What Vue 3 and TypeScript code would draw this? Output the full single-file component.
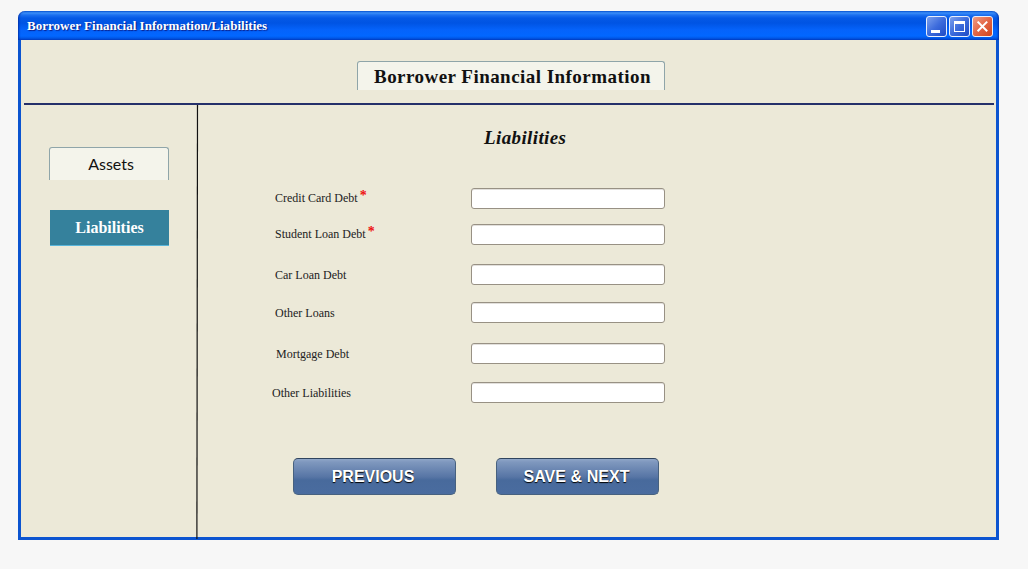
<script setup lang="ts">
import { ref } from 'vue'

interface Field {
  key: string
  label: string
  required: boolean
}

const fields: Field[] = [
  { key: 'credit', label: 'Credit Card Debt', required: true },
  { key: 'student', label: 'Student Loan Debt', required: true },
  { key: 'car', label: 'Car Loan Debt', required: false },
  { key: 'loans', label: 'Other Loans', required: false },
  { key: 'mortgage', label: 'Mortgage Debt', required: false },
  { key: 'liabilities', label: 'Other Liabilities', required: false },
]

const values = ref<Record<string, string>>({})
</script>

<template>
  <div class="page">
    <section class="window">
      <header class="titlebar">
        <span class="caption">Borrower Financial Information/Liabilities</span>
        <div class="controls">
          <svg v-for="kind in ['min', 'max', 'close']" :key="kind" class="control" width="21" height="21" viewBox="0 0 21 21">
            <defs>
              <linearGradient :id="'g-' + kind" x1="0" y1="0" x2="1" y2="1">
                <stop offset="0" :stop-color="kind === 'close' ? '#f0a088' : '#7fa3ee'" />
                <stop offset="0.5" :stop-color="kind === 'close' ? '#e36545' : '#3c6bdc'" />
                <stop offset="1" :stop-color="kind === 'close' ? '#d1441c' : '#1c48c4'" />
              </linearGradient>
            </defs>
            <rect x="0.5" y="0.5" width="20" height="20" rx="2.5" :fill="`url(#g-${kind})`" stroke="#e8effc" />
            <rect v-if="kind === 'min'" x="5" y="14" width="9" height="3" fill="#fff" />
            <path v-else-if="kind === 'max'" fill="#fff" fill-rule="evenodd" d="M5 5H16V16H5ZM6 8V15H15V8Z" />
            <path v-else fill="none" stroke="#fff" stroke-width="2" d="M5.6 5.6L15.2 15.2M15.2 5.6L5.6 15.2" />
          </svg>
        </div>
      </header>

      <div class="content">
        <div class="heading">
          <h1 class="tab heading-tab">Borrower Financial Information</h1>
        </div>
        <div class="rule"></div>
        <div class="body">
          <nav class="sidebar">
            <a class="tab nav-assets">Assets</a>
            <a class="nav-active">Liabilities</a>
          </nav>
          <svg class="divider" width="3" height="434" viewBox="0 0 3 434">
            <line x1="1.5" y1="0" x2="0.9" y2="434" stroke="#111" stroke-width="1.2" />
          </svg>
          <main class="main">
            <h2 class="subtitle">Liabilities</h2>
            <form class="form" @submit.prevent>
              <div v-for="f in fields" :key="f.key" class="row" :class="f.key">
                <label class="label" :for="f.key">
                  <span>{{ f.label }}</span><span v-if="f.required" class="star">*</span>
                </label>
                <input :id="f.key" v-model="values[f.key]" class="input" type="text" />
              </div>
              <div class="actions">
                <button class="btn" type="button">PREVIOUS</button>
                <button class="btn next" type="submit">SAVE &amp; NEXT</button>
              </div>
            </form>
          </main>
        </div>
      </div>
    </section>
  </div>
</template>

<style>
body {
  background: #f7f7f7;
}
</style>

<style scoped>
.page {
  box-sizing: border-box;
  width: 1028px;
  height: 569px;
  padding: 11px 0 0 18px;
  overflow: hidden;
  background: #f7f7f7;
  font-family: "Liberation Serif", "Times New Roman", serif;
}
.window {
  width: 981px;
  height: 529px;
  display: flex;
  flex-direction: column;
}
.titlebar {
  box-sizing: border-box;
  height: 29px;
  flex: none;
  display: flex;
  justify-content: space-between;
  padding: 5px 6px 0 9px;
  border-radius: 7px 7px 0 0;
  background: linear-gradient(#0a5ad8 0, #3b8df8 2px, #1c70f0 4px, #0559e6 7px, #0054e3 12px, #0563fb 19px, #0267ff 25px, #0158e8 27px, #003fc4 29px);
  box-shadow: inset 2px 0 2px -1px #0030a8, inset -2px 0 2px -1px #0030a8;
}
.caption {
  color: #fff;
  font-size: 13px;
  font-weight: bold;
  line-height: 20px;
  letter-spacing: 0.02px;
  white-space: nowrap;
  text-shadow: 1px 1px 1px #0a1f8a;
}
.controls {
  display: flex;
  gap: 2px;
}
.control {
  display: block;
}
.content {
  box-sizing: border-box;
  height: 500px;
  border: 3px solid #0b54d0;
  border-top: 0;
  background: #ece9d8;
}
.heading {
  height: 63px;
  padding: 21px 0 0 336px;
  box-sizing: border-box;
}
.tab {
  box-sizing: border-box;
  display: block;
  margin: 0;
  border: 1px solid #8fa5a9;
  border-bottom: 0;
  border-radius: 3px 3px 0 0;
  background: #f4f4eb;
  text-align: center;
  color: #111;
}
.heading-tab {
  width: 308px;
  height: 29px;
  padding-left: 3px;
  font-size: 19px;
  line-height: 30px;
  letter-spacing: 0.46px;
  white-space: nowrap;
}
.rule {
  height: 2px;
  margin: 0 2px 0 3px;
  background: #25306a;
}
.body {
  display: flex;
  height: 432px;
}
.sidebar {
  width: 175px;
  box-sizing: border-box;
  padding: 42px 0 0 28px;
}
.nav-assets {
  width: 120px;
  height: 33px;
  padding-left: 4px;
  font: 16px/32px Lato, "Open Sans", sans-serif;
}
.nav-active {
  display: block;
  box-sizing: border-box;
  width: 119px;
  height: 36px;
  margin: 30px 0 0 1px;
  border-bottom: 1px solid #58b5da;
  background: #35819c;
  color: #fff;
  font-size: 16px;
  font-weight: bold;
  line-height: 36px;
  text-align: center;
}
.divider {
  flex: none;
  overflow: visible;
}
.main {
  flex: 1;
}
.subtitle {
  margin: 0;
  padding: 22px 0 0 285px;
  font-size: 19px;
  font-style: italic;
  line-height: 22px;
  letter-spacing: 0.38px;
  color: #111;
}
.form {
  padding-top: 39px;
}
.row {
  display: flex;
  height: 21px;
  padding-left: 76px;
}
.student { margin-top: 15px; }
.car { margin-top: 19px; }
.loans { margin-top: 17px; }
.mortgage { margin-top: 20px; padding-left: 77px; }
.mortgage .label { width: 195px; }
.liabilities { margin-top: 18px; padding-left: 73px; }
.liabilities .label { width: 199px; }
.label {
  display: flex;
  width: 196px;
  color: #222;
  font-size: 12px;
  line-height: 21px;
  white-space: nowrap;
}
.car .label,
.loans .label,
.mortgage .label,
.liabilities .label {
  line-height: 23px;
}
.star {
  margin-left: 2px;
  color: #ee1111;
  font-size: 14px;
  font-weight: bold;
  line-height: 15px;
}
.input {
  box-sizing: border-box;
  width: 194px;
  height: 21px;
  margin: 0;
  padding: 0 4px;
  border: 1px solid #989184;
  border-radius: 3px;
  background: #fff;
  outline: none;
  box-shadow: inset 0 1px 0 #e2e0dc;
  font-family: inherit;
  font-size: 12px;
}
.actions {
  display: flex;
  gap: 40px;
  padding: 55px 0 0 94px;
}
.btn {
  box-sizing: border-box;
  width: 163px;
  height: 37px;
  margin: 0;
  padding: 0 3px 0 0;
  border: 1px solid #47617f;
  border-top-color: #30445e;
  border-radius: 5px;
  background: linear-gradient(#8fa6c8 0, #7f98be 3px, #5775a5 18px, #486a9c 21px, #4a6c9f 100%);
  color: #fff;
  font: bold 16px/35px "Liberation Sans", Arial, sans-serif;
  text-shadow: 0 1px 1px #000;
}
.next {
  padding-right: 2px;
  letter-spacing: 0.05px;
}
</style>
